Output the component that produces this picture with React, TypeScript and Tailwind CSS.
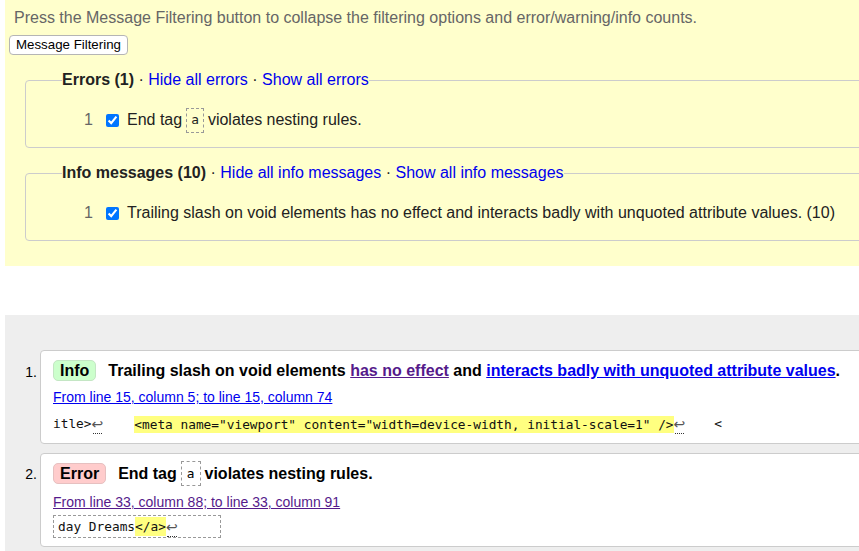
import React from "react";

const mono = "font-['DejaVu_Sans_Mono',monospace] text-[12.8px]";

function Ret() {
  return (
    <span className="relative inline-block text-[#555] font-['DejaVu_Sans',sans-serif] text-[14px] leading-[16px]">
      ↩
      <span className="absolute left-[1px] right-[1px] bottom-[-2px] border-b border-dotted border-[#333]" />
    </span>
  );
}

function TagBox({ big }: { big?: boolean }) {
  return (
    <span
      className={`inline-flex items-center justify-center border border-dashed border-[#999] font-normal ${mono} ${
        big ? "h-[25px] px-[5px]" : "h-[25px] px-[4px]"
      } mx-[4px]`}
    >
      a
    </span>
  );
}

function FilterSet({
  title,
  hide,
  show,
  children,
}: {
  title: string;
  hide: string;
  show: string;
  children: React.ReactNode;
}) {
  return (
    <fieldset className="ml-[20px] border border-[#ccc] rounded-[4px] pt-[20px] pb-[17px]">
      <legend className="ml-[36px] leading-[20px] text-[#222]">
        <span className="font-bold">{title}</span>
        <span> · </span>
        <span className="text-[#0000ee]">{hide}</span>
        <span> · </span>
        <span className="text-[#0000ee]">{show}</span>
      </legend>
      {children}
    </fieldset>
  );
}

function FilterRow({ children }: { children: React.ReactNode }) {
  return (
    <div className="flex items-center pl-[58px] leading-[20px] h-[20px] text-[#222]">
      <span className="text-[#666] w-[9px]">1</span>
      <input type="checkbox" defaultChecked className="ml-[13px] mr-[8px] w-[13px] h-[13px]" />
      <span className="flex items-center whitespace-nowrap">{children}</span>
    </div>
  );
}

function Badge({ kind }: { kind: "Info" | "Error" }) {
  return (
    <span
      className={`inline-block rounded-[5px] border px-[6px] leading-[19px] font-bold ${
        kind === "Info" ? "bg-[#ccffcc] border-[#c4e6c4]" : "bg-[#ffcccc] border-[#e6c0c0]"
      }`}
    >
      {kind}
    </span>
  );
}

export default function App() {
  return (
    <div className="w-[859px] h-[551px] overflow-hidden bg-white font-['Liberation_Sans',Arial,sans-serif] text-[16px] text-black">
      <div className="w-[900px]">
        <div className="ml-[5px] bg-[#ffffcc] pt-[8px] pb-[25px]">
          <p className="pl-[9px] leading-[20px] text-[#666]">
            Press the Message Filtering button to collapse the filtering options and error/warning/info counts.
          </p>
          <div className="pl-[4px] mt-[4px]">
            <button className="bg-white border border-[#b5b5b5] rounded-[4px] px-[6px] h-[20px] text-[13.3px] leading-[18px] text-black">
              Message Filtering
            </button>
          </div>
          <div className="mt-[14px]">
            <FilterSet title="Errors (1)" hide="Hide all errors" show="Show all errors">
              <FilterRow>
                End tag
                <TagBox />
                violates nesting rules.
              </FilterRow>
            </FilterSet>
          </div>
          <div className="mt-[15px]">
            <FilterSet
              title="Info messages (10)"
              hide="Hide all info messages"
              show="Show all info messages"
            >
              <FilterRow>
                Trailing slash on void elements has no effect and interacts badly with unquoted attribute values. (10)
              </FilterRow>
            </FilterSet>
          </div>
        </div>

        <div className="mt-[49px] ml-[5px] bg-[#eeeeee] pt-[35px] pb-[10px] flex flex-col gap-[9px]">
          <div className="flex">
            <div className="w-[35px] shrink-0 text-right pr-[3px] pt-[12px] text-[14px] leading-[20px]">1.</div>
            <div className="flex-1 bg-white border border-[#ccc] rounded-[4px] pl-[12px] pt-[9px] pb-[10px]">
              <div className="flex items-center whitespace-nowrap">
                <Badge kind="Info" />
                <span className="ml-[12px] font-bold leading-[21px]">
                  Trailing slash on void elements{" "}
                  <span className="underline text-[#551a8b]">has no effect</span> and{" "}
                  <span className="underline text-[#0000ee]">interacts badly with unquoted attribute values</span>.
                </span>
              </div>
              <div className="mt-[7px] text-[14px] leading-[18px] text-[#0000ee] underline">
                From line 15, column 5; to line 15, column 74
              </div>
              <div className={`mt-[9px] h-[18px] whitespace-pre ${mono} text-[#111] flex items-center`}>
                <span>itle&gt;</span>
                <Ret />
                <span className="inline-block w-[31px]" />
                <span className="bg-[#ffff80] leading-[17px]">
                  &lt;meta name="viewport" content="width=device-width, initial-scale=1" /&gt;
                </span>
                <Ret />
                <span className="inline-block w-[29px]" />
                <span>&lt;</span>
              </div>
            </div>
          </div>

          <div className="flex">
            <div className="w-[35px] shrink-0 text-right pr-[3px] pt-[11px] text-[14px] leading-[20px]">2.</div>
            <div className="flex-1 bg-white border border-[#ccc] rounded-[4px] pl-[12px] pt-[7px] pb-[8px]">
              <div className="flex items-center whitespace-nowrap">
                <Badge kind="Error" />
                <span className="ml-[12px] font-bold leading-[21px] flex items-center">
                  End tag
                  <TagBox big />
                  violates nesting rules.
                </span>
              </div>
              <div className="mt-[7px] text-[14px] leading-[18px] text-[#551a8b] underline">
                From line 33, column 88; to line 33, column 91
              </div>
              <div className="mt-[3px]">
                <div
                  className={`inline-flex items-center w-[168px] h-[23px] border border-dashed border-[#999] pl-[4px] whitespace-pre ${mono} text-[#111]`}
                >
                  <span>day Dreams</span>
                  <span className="bg-[#ffff80]">&lt;/a&gt;</span>
                  <Ret />
                </div>
              </div>
            </div>
          </div>
        </div>
      </div>
    </div>
  );
}
